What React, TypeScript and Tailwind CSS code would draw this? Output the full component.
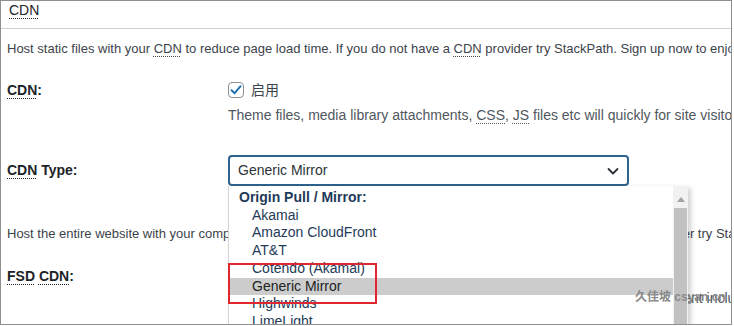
import React from "react";

const items = ["Akamai", "Amazon CloudFront", "AT&T", "Cotendo (Akamai)", "Generic Mirror", "Highwinds", "LimeLight"];

function Abbr({ children }: { children: React.ReactNode }) {
  return <span className="underline decoration-dotted decoration-1 underline-offset-[3px]">{children}</span>;
}

export default function App() {
  return (
    <div className="w-[734px] h-[326px] bg-white">
      <div className="relative w-[732px] h-[325px] border border-[#8f8f8f] overflow-hidden bg-white font-['Liberation_Sans',Arial,'Noto_Sans_CJK_SC',sans-serif] text-[#3c434a]">
        <div className="h-[28px] border-b border-[#cfcfcf] pl-[8px] text-[14px] leading-[18px] text-[#1d2327]">
          <Abbr>CDN</Abbr>
        </div>
        <div className="pl-[6px]">
          <p className="mt-[11px] text-[13px] leading-[18px] whitespace-nowrap">
            Host static files with your <Abbr>CDN</Abbr> to reduce page load time. If you do not have a <Abbr>CDN</Abbr> provider try StackPath. Sign up now to enjoy a special offer!
          </p>
          <div className="mt-[23px] flex items-center h-[18px]">
            <div className="w-[221px] text-[14px] font-bold text-[#1d2327]">
              <Abbr>CDN</Abbr>:
            </div>
            <div className="flex items-center gap-[7px]">
              <span className="w-[16px] h-[16px] rounded-[4px] border border-[#8c8f94] flex items-center justify-center bg-white">
                <svg width="14" height="14" viewBox="0 0 14 14">
                  <path d="M2.5 7.2 L5.6 10.2 L11.6 3.2" fill="none" stroke="#2271b1" strokeWidth="2" strokeLinecap="round" strokeLinejoin="round" />
                </svg>
              </span>
              <span className="text-[14px] text-[#3c434a]">启用</span>
            </div>
          </div>
          <p className="mt-[7px] pl-[221px] text-[14px] leading-[18px] whitespace-nowrap text-[#50575e]">
            Theme files, media library attachments, <Abbr>CSS</Abbr>, <Abbr>JS</Abbr> files etc will quickly for site visitors.
          </p>
          <div className="mt-[31px] flex items-center h-[31px]">
            <div className="w-[221px] text-[14px] font-bold text-[#1d2327]">
              <Abbr>CDN</Abbr> Type:
            </div>
            <div className="w-[401px] h-[31px] rounded-[4px] border-2 border-[#2f628f] flex items-center justify-between pl-[8px] pr-[7px] text-[14px] text-[#2c3338]">
              <span>Generic Mirror</span>
              <svg width="14" height="14" viewBox="0 0 14 14">
                <path d="M2.5 5 L7 9.5 L11.5 5" fill="none" stroke="#2c3338" strokeWidth="1.8" strokeLinecap="round" strokeLinejoin="round" />
              </svg>
            </div>
          </div>
          <p className="mt-[39px] text-[13px] leading-[18px] whitespace-nowrap">
            Host the entire website with your compatible <Abbr>CDN</Abbr> provider to reduce page load time. If you do not have a <Abbr>CDN</Abbr> provider try StackPath.
          </p>
          <div className="mt-[24px] flex items-center h-[18px]">
            <div className="w-[221px] text-[14px] font-bold text-[#1d2327]">
              <Abbr>FSD</Abbr> <Abbr>CDN</Abbr>:
            </div>
          </div>
          <p className="mt-[4px] pl-[221px] text-[14px] leading-[18px] whitespace-nowrap text-[#50575e]">
            Deliver visitors the good possible response and load times for all site content including HTML, media.
          </p>
        </div>

        {/* dropdown list */}
        <div className="absolute left-[227px] top-[185px] w-[460px] h-[150px] bg-white border-l border-[#d6d6d6] shadow-[3px_2px_5px_rgba(0,0,0,0.18)] flex">
          <div className="flex-1 pt-[3px] text-[14px] leading-[17.7px] text-[#1f3b58]">
            <div className="pl-[10px] font-bold">Origin Pull / Mirror:</div>
            {items.map((it) => (
              <div key={it} className={`pl-[23px] ${it === "Generic Mirror" ? "bg-[#cccccc] text-[#222]" : ""}`}>
                {it}
              </div>
            ))}
          </div>
          <div className="w-[15px] bg-[#f1f1f1] flex flex-col items-center">
            <div className="h-[22px] pt-[4px] flex items-center justify-center">
              <svg width="8" height="5" viewBox="0 0 8 5">
                <path d="M0 5 L4 0 L8 5 Z" fill="#a3a3a3" />
              </svg>
            </div>
            <div className="w-[13px] flex-1 bg-[#c1c1c1]" />
          </div>
        </div>

        {/* red highlight box */}
        <div className="absolute left-[227px] top-[262px] w-[149px] h-[41px] border-2 border-[#e0262f]" />

        {/* watermark */}
        <div className="absolute left-[634px] top-[288px] text-[12px] leading-[16px] font-bold text-[#8a8a8a] whitespace-nowrap">
          久佳坡 csyan.cn
        </div>
      </div>
    </div>
  );
}
